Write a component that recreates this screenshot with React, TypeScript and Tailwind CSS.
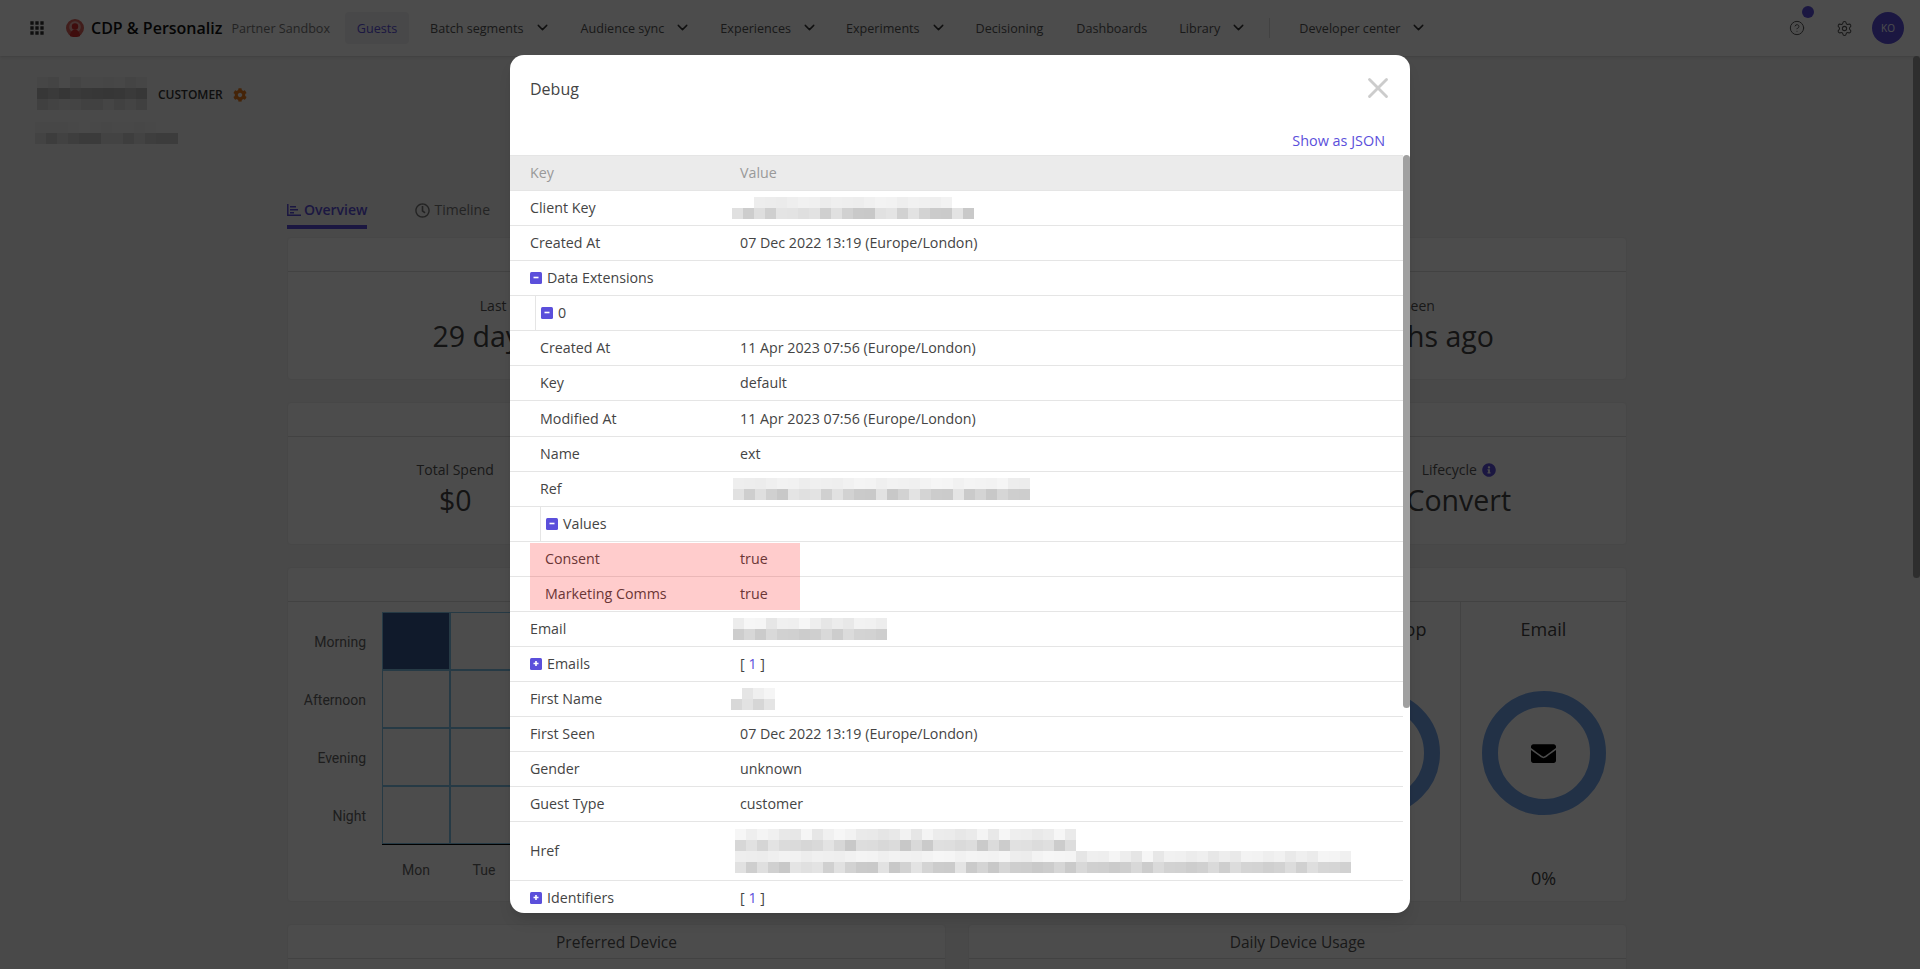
import { ChevronDown, CircleHelp, Settings, X } from "lucide-react";
import { FaCog, FaEnvelope, FaInfoCircle, FaRegClock } from "react-icons/fa";
import { MdApps } from "react-icons/md";

// blurred-out customer data, drawn as a mosaic of grey squares
function Mosaic({ rows, seed = 1, tones = [246, 228], className = "" }: { rows: [number, number][]; seed?: number; tones?: number[]; className?: string }) {
  return (
    <div className={"flex flex-col " + className}>
      {rows.map(([offset, cells], r) => (
        <div key={r} className="flex h-[11px]">
          <div style={{ width: offset * 11 }} />
          {Array.from({ length: cells }).map((_, c) => {
            const n = (c * 37 + r * 53 + seed * 19 + ((c * c) % 7) * 11) % 29;
            const base = tones[r % tones.length];
            const g = base - (n % (r % 2 === 0 ? 18 : 30));
            return <div key={c} className="h-[11px] w-[11px]" style={{ backgroundColor: `rgb(${g},${g},${g})` }} />;
          })}
        </div>
      ))}
    </div>
  );
}

function NavItem({ label, chevron, className = "" }: { label: string; chevron?: boolean; className?: string }) {
  return (
    <div className={"flex items-center gap-[10px] text-[12.6px] text-[#555] " + className}>
      <span className="pt-[3px]">{label}</span>
      {chevron && <ChevronDown size={17} strokeWidth={2} className="text-[#333]" />}
    </div>
  );
}

function Header() {
  return (
    <header className="flex h-14 shrink-0 items-center bg-white pl-[27px] pr-4 shadow-sm">
      <MdApps size={20} className="text-[#333]" />
      <svg viewBox="0 0 18 18" className="ml-[19px] h-[18px] w-[18px]">
        <circle cx="9" cy="9" r="9" fill="#d9635c" />
        <circle cx="9" cy="8" r="5.8" fill="#eeb0ab" />
        <circle cx="9" cy="7.500" r="3.200" fill="#d22c2c" />
        <path d="M3.800 17c.6-4.400 2.600-6.200 5.200-6.200s4.600 1.800 5.200 6.200c-1.600.8-3.200 1-5.200 1s-3.600-.2-5.200-1z" fill="#d22c2c" />
      </svg>
      <span className="ml-[7px] text-base font-semibold text-[#111]">CDP &amp; Personaliz</span>
      <span className="ml-[9px] pt-[3px] text-[12.6px] text-[#777]">Partner Sandbox</span>
      <div className="ml-[15px] flex h-8 w-16 items-center justify-center rounded bg-[#f0f0f4] pt-[3px] text-[12.6px] text-[#5b4fdb]">Guests</div>
      <NavItem label="Batch segments" chevron className="ml-[21px]" />
      <NavItem label="Audience sync" chevron className="ml-[30px]" />
      <NavItem label="Experiences" chevron className="ml-[29px]" />
      <NavItem label="Experiments" chevron className="ml-7" />
      <NavItem label="Decisioning" className="ml-[29px]" />
      <NavItem label="Dashboards" className="ml-[33px]" />
      <NavItem label="Library" chevron className="ml-8" />
      <div className="ml-[22px] h-5 w-px bg-[#ddd]" />
      <NavItem label="Developer center" chevron className="ml-[29px]" />
      <div className="ml-auto flex items-center">
        <div className="relative">
          <CircleHelp size={16} strokeWidth={1.5} className="text-[#555]" />
          <div className="absolute -right-[9px] -top-[14px] h-3 w-3 rounded-full bg-[#5b4fdb]" />
        </div>
        <Settings size={17} strokeWidth={1.5} className="ml-[31px] text-[#555]" />
        <div className="ml-[19px] flex h-8 w-8 items-center justify-center rounded-full bg-[#5b4fdb] text-[10px] text-white">KO</div>
      </div>
    </header>
  );
}

function Card({ title, children, className = "" }: { title?: string; children?: React.ReactNode; className?: string }) {
  return (
    <section className={"rounded border border-[#eee] bg-white " + className}>
      <div className="flex h-[34px] items-center justify-center border-b border-[#ddd] pt-[3px] text-[15.5px] text-[#555]">{title}</div>
      {children}
    </section>
  );
}

function Stat({ label, value, info }: { label?: string; value?: string; info?: boolean }) {
  return (
    <div className="flex flex-1 flex-col items-center">
      <div className="flex items-center gap-[5px] text-sm text-[#555]">
        {label}
        {info && <FaInfoCircle size={14} className="text-[#5b4fdb]" />}
      </div>
      <div className="text-[28.5px] leading-[40px] text-[#444]">{value}</div>
    </div>
  );
}

const parts = ["Morning", "Afternoon", "Evening", "Night"];

function Heatmap() {
  return (
    <div className="ml-[27px] mt-[10px] font-['Roboto',sans-serif] text-sm text-[#666]">
      <div className="flex">
        <div className="mr-4 flex w-[51px] flex-col items-end pt-px">
          {parts.map((p) => (
            <div key={p} className="flex h-[58px] items-center justify-end whitespace-nowrap">
              {p}
            </div>
          ))}
        </div>
        <div className="border-b border-black">
          {parts.map((p, r) => (
            <div key={p} className="flex">
              {Array.from({ length: 7 }).map((_, c) => (
                <div
                  key={c}
                  className={
                    r === 0 && c === 0
                      ? "h-[58px] w-[68px] border border-[#7fc4e8] bg-[#365890]"
                      : "h-[58px] w-[68px] border border-[#7fc4e8]"
                  }
                />
              ))}
            </div>
          ))}
        </div>
      </div>
      <div className="ml-[67px] mt-[15px] flex">
        <div className="w-[68px] text-center">Mon</div>
        <div className="w-[68px] text-center">Tue</div>
      </div>
    </div>
  );
}

function Donut({ label, children, labelClass = "" }: { label: string; children?: React.ReactNode; labelClass?: string }) {
  return (
    <div className="flex h-[300px] w-[166px] flex-col items-center border-l border-[#e2e2e2]">
      <div className={"mt-[13px] whitespace-nowrap text-lg text-[#444] " + labelClass}>{label}</div>
      <div className="mt-[48px] flex h-[124px] w-[124px] shrink-0 items-center justify-center rounded-full border-[16px] border-[#74a6ec]">{children}</div>
      <div className="mt-[49px] text-lg text-[#444]">0%</div>
    </div>
  );
}

function Toggle({ kind }: { kind: "minus" | "plus" }) {
  return (
    <svg viewBox="0 0 12 12" className="-mt-px h-3 w-3 shrink-0">
      <rect width="12" height="12" rx="1.500" fill="#5b4fdb" />
      <path d={kind === "minus" ? "M3.500 5.500h5" : "M3.500 5.500h5M6 3v5"} stroke="#fff" strokeWidth="1.600" />
    </svg>
  );
}

type RowData = {
  k: string;
  v?: string;
  indent?: string;
  toggle?: "minus" | "plus";
  line?: string;
  count?: boolean;
  mosaic?: React.ReactNode;
  height?: string;
};

const rows: RowData[] = [
  { k: "Client Key", mosaic: <Mosaic rows={[[2, 18], [0, 22]]} seed={2} className="-ml-2" /> },
  { k: "Created At", v: "07 Dec 2022 13:19 (Europe/London)" },
  { k: "Data Extensions", toggle: "minus" },
  { k: "0", toggle: "minus", indent: "pl-[31px]", line: "left-[25px]" },
  { k: "Created At", v: "11 Apr 2023 07:56 (Europe/London)", indent: "pl-[30px]" },
  { k: "Key", v: "default", indent: "pl-[30px]" },
  { k: "Modified At", v: "11 Apr 2023 07:56 (Europe/London)", indent: "pl-[30px]", height: "h-[36px]" },
  { k: "Name", v: "ext", indent: "pl-[30px]" },
  { k: "Ref", indent: "pl-[30px]", mosaic: <Mosaic rows={[[0, 27], [0, 27]]} seed={5} className="-ml-[7px]" /> },
  { k: "Values", toggle: "minus", indent: "pl-[36px]", line: "left-[30px]" },
  { k: "Consent", v: "true", indent: "pl-[35px]" },
  { k: "Marketing Comms", v: "true", indent: "pl-[35px]" },
  { k: "Email", mosaic: <Mosaic rows={[[0, 14], [0, 14]]} seed={3} className="-ml-[7px]" /> },
  { k: "Emails", toggle: "plus", count: true },
  { k: "First Name", mosaic: <Mosaic rows={[[1, 3], [0, 4]]} seed={7} className="-ml-[9px]" /> },
  { k: "First Seen", v: "07 Dec 2022 13:19 (Europe/London)" },
  { k: "Gender", v: "unknown" },
  { k: "Guest Type", v: "customer" },
  { k: "Href", height: "h-[59px]", mosaic: <Mosaic rows={[[0, 31], [0, 31], [0, 56], [0, 56]]} seed={4} className="-ml-[5px]" /> },
  { k: "Identifiers", toggle: "plus", count: true },
];

function Row({ row }: { row: RowData }) {
  return (
    <div className={"relative flex shrink-0 items-center border-b border-[#e5e5e5] text-[14.25px] text-[#444] " + (row.height ?? "h-[35px]")}>
      {row.line && <div className={"absolute top-0 h-full w-px bg-[#e5e5e5] " + row.line} />}
      <div className={"flex w-[230px] shrink-0 items-center gap-[5px] " + (row.indent ?? "pl-5")}>
        {row.toggle && <Toggle kind={row.toggle} />}
        <span>{row.k}</span>
      </div>
      {row.v && <span>{row.v}</span>}
      {row.count && (
        <span className="whitespace-pre">
          [ <span className="text-[#5b4fdb]">1</span> ]
        </span>
      )}
      {row.mosaic}
    </div>
  );
}

function DebugModal() {
  return (
    <div className="relative mt-[55px] flex h-[858px] w-[900px] flex-col overflow-hidden rounded-[14px] bg-white shadow-lg">
      <div className="flex h-[100px] shrink-0 flex-col pl-5 pr-5">
        <div className="flex items-start justify-between">
          <h2 className="mt-[22px] text-base text-[#444]">Debug</h2>
          <X size={34} strokeWidth={2} className="-mr-[5px] mt-4 text-[#ccc]" />
        </div>
        <div className="mt-[25px] pr-[5px] text-right text-[14.4px] text-[#5b4fdb]">Show as JSON</div>
      </div>
      <div className="flex w-[893px] flex-col border-t border-[#e5e5e5]">
        <div className="flex h-[35px] shrink-0 items-center border-b border-[#e5e5e5] bg-[#ebebeb] text-[14.25px] text-[#999]">
          <div className="w-[230px] pl-5">Key</div>
          <div>Value</div>
        </div>
        {rows.map((r, i) => (
          <Row key={i} row={r} />
        ))}
      </div>
      {/* consent highlight sits over the two rows */}
      <div className="absolute left-5 top-[488px] h-[67px] w-[270px] bg-[#ff0000]/20" />
      <div className="absolute right-0 top-[100px] h-[553px] w-[7px] rounded-full bg-[#a0a0a0]" />
    </div>
  );
}

export default function App() {
  return (
    <div className="relative h-[969px] overflow-hidden bg-[#f3f3f3] font-['Open_Sans',sans-serif]">
      <Header />
      <div className="ml-[37px] mt-[21px] flex items-center">
        <Mosaic rows={[[0, 10], [0, 10], [0, 10]]} seed={6} tones={[244, 205, 232]} />
        <span className="ml-2 mt-0.5 rounded bg-[#f5f5f5] px-[3px] py-px text-xs font-semibold text-[#333]">CUSTOMER</span>
        <FaCog size={14} className="ml-[7px] mt-0.5 text-[#e87a1d]" />
      </div>
      <Mosaic rows={[[0, 13], [0, 13]]} seed={8} tones={[246, 226]} className="ml-[35px] mt-3" />
      <main className="ml-[287px] mt-[51px] w-[1340px]">
        <nav className="flex h-[34px] text-sm font-semibold">
          <div className="flex h-[34px] items-center gap-[3px] border-b-4 border-[#5b4fdb] text-[#5b4fdb]">
            <svg viewBox="0 0 14 12" className="h-3 w-[14px]">
              <path d="M.8 0v11.200H14" fill="none" stroke="currentColor" strokeWidth="1.500" />
              <path d="M3 2h6v1.500H3zM3 5h8v1.500H3zM3 8h4v1.500H3z" fill="currentColor" />
            </svg>
            <span>Overview</span>
          </div>
          <div className="ml-[48px] flex h-[30px] items-center gap-[4px] font-normal text-[#777]">
            <FaRegClock size={15} />
            <span>Timeline</span>
          </div>
        </nav>
        <div className="mt-2 flex flex-col gap-[22px]">
          <Card className="h-[143px]">
            <div className="flex pt-[24px]">
              <Stat label="Last Seen" value="29 days ago" />
              <Stat />
              <Stat label="First Seen" value="4 months ago" />
            </div>
          </Card>
          <Card className="h-[143px]">
            <div className="flex pt-[23px]">
              <Stat label="Total Spend" value="$0" />
              <Stat />
              <Stat />
              <Stat label="Lifecycle" value="Convert" info />
            </div>
          </Card>
          <Card className="h-[335px]">
            <div className="flex justify-between">
              <Heatmap />
              <div className="flex">
                <Donut label="Web Desktop" labelClass="pr-[14px]" />
                <Donut label="Email">
                  <FaEnvelope size={25} className="text-black" />
                </Donut>
              </div>
            </div>
          </Card>
          <div className="flex gap-[22px]">
            <Card title="Preferred Device" className="h-[200px] flex-1" />
            <Card title="Daily Device Usage" className="h-[200px] flex-1" />
          </div>
        </div>
      </main>
      {/* page scrollbar */}
      <div className="absolute right-0 top-14 h-[522px] w-[7px] rounded-full bg-[#999]" />
      <div className="absolute inset-0 bg-black/70" />
      <div className="absolute inset-0 flex justify-center">
        <DebugModal />
      </div>
    </div>
  );
}
